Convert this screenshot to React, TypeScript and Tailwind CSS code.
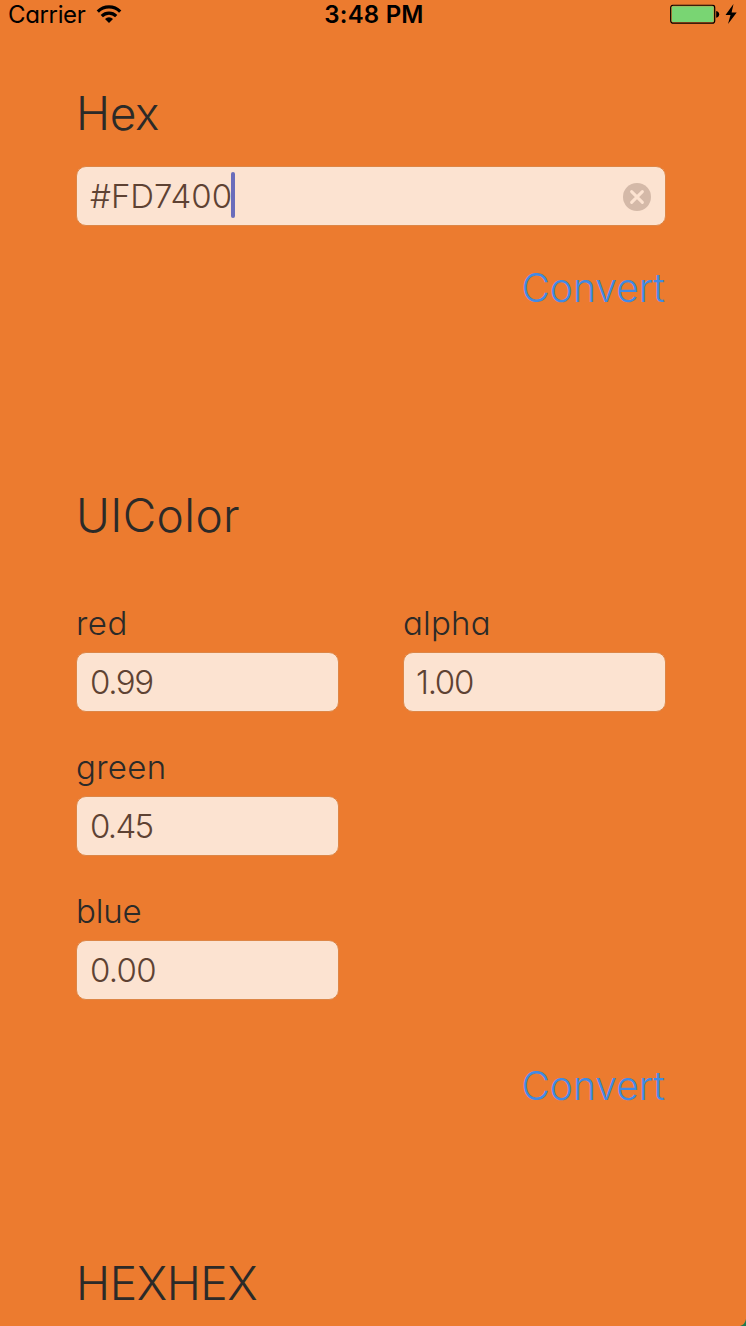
import type { ReactNode } from 'react';

function Heading({ children, className }: { children: ReactNode; className: string }) {
  return <h2 className={`h-[58px] text-[46px] leading-[58px] ${className}`}>{children}</h2>;
}

function Field({ children, className = '' }: { children: ReactNode; className?: string }) {
  return (
    <div
      className={`flex h-[60px] items-center rounded-[10px] border border-[#dd8646] bg-[#fce3d1] pl-[13px] text-[33px] leading-[56px] text-[#5e4233] ${className}`}
    >
      {children}
    </div>
  );
}

function Component({ label, value, labelClass = '', valueClass = '' }: {
  label: string;
  value: string;
  labelClass?: string;
  valueClass?: string;
}) {
  return (
    <div className="w-[263px]">
      <div className={`mb-[9px] h-10 text-[33px] leading-10 ${labelClass}`}>{label}</div>
      <Field>
        <span className={valueClass}>{value}</span>
      </Field>
    </div>
  );
}

function Convert() {
  return (
    <div className="flex h-12 justify-end pr-[1px]">
      <button className="text-[39px] leading-[48px] text-[#418ae4]">Convert</button>
    </div>
  );
}

function StatusBar() {
  return (
    <div className="grid h-[30px] grid-cols-3 items-center text-[24px] leading-[30px] text-black">
      <div className="flex items-center gap-[11px] pl-[8px]">
        <span className="tracking-[-0.35px]">Carrier</span>
        <svg className="-translate-y-px" width="26" height="20" viewBox="0 0 26 20" fill="none" stroke="black" strokeWidth="3.2">
          <path d="M1.800 7.600a15.800 15.800 0 0 1 22.400 0" />
          <path d="M5.800 12.200a10.200 10.200 0 0 1 14.400 0" />
          <path d="M13 19l-4-4.100a5.800 5.800 0 0 1 8 0z" fill="black" stroke="none" />
        </svg>
      </div>
      <div className="pl-[2px] text-center font-semibold tracking-[0.2px]">3:48 PM</div>
      <div className="flex items-center justify-end gap-[5px] pr-[9px]">
        <svg className="-translate-y-[0.5px]" width="50" height="20" viewBox="0 0 50 20">
          <rect x="0.7" y="0.7" width="44" height="18" rx="2.500" fill="none" stroke="black" strokeWidth="1.2" />
          <rect x="1.800" y="1.800" width="41.800" height="15.800" rx="1" fill="#79d573" />
          <path d="M46.200 6.400c4 .5 4 6.300 0 6.800z" fill="black" />
        </svg>
        <svg className="-translate-y-px" width="12" height="20" viewBox="0 0 12 20">
          <path d="M8.500 0L0.500 11h5L3 20l8.700-11.500H6.600z" fill="black" />
        </svg>
      </div>
    </div>
  );
}

export default function App() {
  return (
    <div className="relative h-[1326px] w-[746px] overflow-hidden bg-[#ec7b2f] font-['Inter',sans-serif] font-light text-[#2b2a28] [font-feature-settings:'cv11'_1]">
      <div className="font-normal">
        <StatusBar />
      </div>
      <main className="pt-[54px] pr-[80px] pl-[76px]">
        <Heading className="tracking-[-0.4px]">Hex</Heading>
        <Field className="mt-[24px] justify-between pr-[14px]">
          <span className="flex items-center">
            <span>#FD7400</span>
            <span className="-mt-[2px] -ml-[1px] h-[46px] w-[4px] rounded-full bg-[#6a6dbb]" />
          </span>
          <svg className="translate-y-px" width="28" height="28" viewBox="0 0 28 28">
            <circle cx="14" cy="14" r="14" fill="#d4b9a8" />
            <path d="M8.600 8.600l10.800 10.800M19.400 8.600L8.600 19.400" stroke="#fce3d1" strokeWidth="3" strokeLinecap="round" />
          </svg>
        </Field>
        <div className="mt-[38px]">
          <Convert />
        </div>

        <Heading className="mt-[174px] tracking-[0.4px]">UIColor</Heading>
        <div className="mt-[59px] flex justify-between">
          <div className="flex flex-col gap-[35px]">
            <Component label="red" value="0.99" labelClass="tracking-[0.5px]" valueClass="tracking-[-1.4px]" />
            <Component label="green" value="0.45" labelClass="tracking-[0.3px]" valueClass="tracking-[-1.7px]" />
            <Component label="blue" value="0.00" labelClass="tracking-[-0.2px]" valueClass="tracking-[-0.7px]" />
          </div>
          <Component label="alpha" value="1.00" labelClass="tracking-[0.2px]" valueClass="-ml-[1px] tracking-[-1.300px]" />
        </div>
        <div className="mt-[62px]">
          <Convert />
        </div>

        <Heading className="mt-[144px] tracking-[-0.4px]">HEXHEX</Heading>
      </main>
      <svg className="absolute right-0 bottom-0" width="6" height="7" viewBox="0 0 6 7">
        <path d="M6 0v7H0C3.500 6 5 4 6 0z" fill="#1d7a50" />
      </svg>
    </div>
  );
}
